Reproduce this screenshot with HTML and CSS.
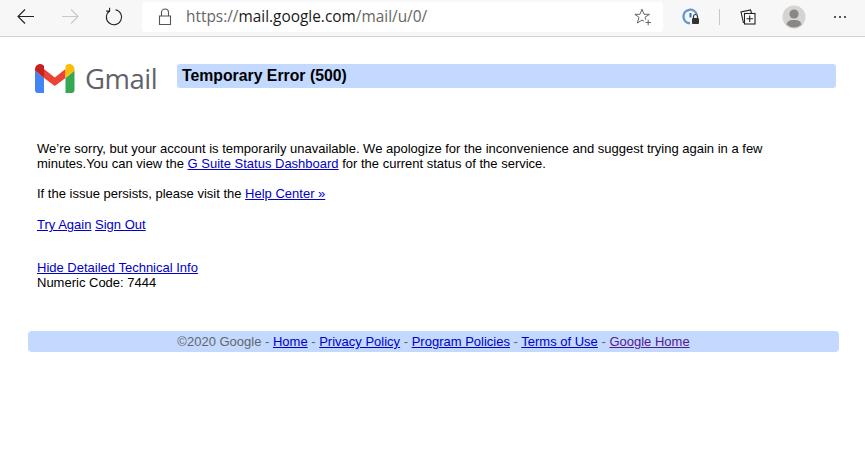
FILE: index.html
```html
<!DOCTYPE html>
<html lang="en">
<head>
<meta charset="utf-8">
<title>Gmail</title>
<link rel="stylesheet" href="styles.css">
</head>
<body>
<header class="toolbar">
  <svg class="ico back" width="20" height="20" viewBox="0 0 20 20"><path d="M18 9.500H2M9 2.500L2 9.500L9 16.500" fill="none" stroke="#222" stroke-width="1.100"/></svg>
  <svg class="ico fwd" width="20" height="20" viewBox="0 0 20 20"><path d="M2 9.500H18M11 2.500L18 9.500L11 16.500" fill="none" stroke="#c8c8c8" stroke-width="1.100"/></svg>
  <svg class="ico reload" width="20" height="20" viewBox="0 0 20 20"><path d="M6 3.200A7.600 7.600 0 1 0 11.500 2.200M5.600 0.200V3.600H2.200" fill="none" stroke="#222" stroke-width="1.100" transform="translate(0 0.500)"/></svg>
  <div class="address">
    <svg class="lock" width="14" height="18" viewBox="0 0 14 18"><path d="M1.500 8h11v8.500h-11zM3.500 8V4.500a3.500 3.500 0 0 1 7 0V8" fill="none" stroke="#555" stroke-width="1.100"/></svg>
    <span class="url"><span class="dim">https://</span>mail.google.com<span class="dim">/mail/u/0/</span></span>
    <svg class="star" width="18" height="18" viewBox="0 0 18 18"><path d="M11.800 11.800L11 9.300L15.500 6.300H10L8 1.200L6 6.300H0.800L5 9.300L3.400 15L8 12L10 13.200" fill="none" stroke="#666" stroke-width="1"/><path d="M11.500 14.500H17M14.200 11.700V17.300" stroke="#666" stroke-width="1"/></svg>
  </div>
  <svg class="ext" width="18" height="20" viewBox="0 0 18 20"><path d="M14.800 7.500A6.800 6.800 0 1 0 8 16.300" fill="none" stroke="#5b9bd9" stroke-width="2.400"/><path d="M5.500 4.500A5.200 5.200 0 0 1 13 5.500" fill="none" stroke="#999" stroke-width="1"/><path d="M8.500 6v4.500" stroke="#2a6fc0" stroke-width="2"/><rect x="10" y="11" width="7" height="6" rx="1" fill="#333"/><path d="M11.500 11V9.500a2 2 0 0 1 4 0V11" fill="none" stroke="#333" stroke-width="1.200"/></svg>
  <span class="sep"></span>
  <svg class="coll" width="18" height="18" viewBox="0 0 18 18"><path d="M4.500 15L2 4L11.500 2L12.500 5" fill="none" stroke="#222" stroke-width="1.100"/><rect x="5.500" y="5.500" width="10.500" height="10.500" fill="#fff" stroke="#222" stroke-width="1.100"/><path d="M10.700 7.500V14M7.500 10.700H14" stroke="#222" stroke-width="1.100"/></svg>
  <svg class="avatar" width="24" height="24" viewBox="0 0 24 24"><circle cx="12" cy="12" r="11.500" fill="#d6d4d2"/><circle cx="12" cy="9" r="4.600" fill="#8a8886"/><path d="M4.500 19.500C5.500 15.500 8.500 15 12 15S18.500 15.500 19.500 19.500A11 11 0 0 1 4.500 19.500Z" fill="#8a8886"/></svg>
  <span class="more"><i></i><i></i><i></i></span>
</header>
<main class="page">
  <div class="top">
    <div class="logo">
      <svg width="40" height="30" viewBox="0 0 40 30">
        <path d="M0 6.500V26a3 3 0 0 0 3 3H9V14Z" fill="#4285f4"/>
        <path d="M30.500 29H36.500a3 3 0 0 0 3-3V6.500L30.500 14Z" fill="#34a853"/>
        <path d="M9 14V5L19.800 13.500L30.500 5V14L19.800 22Z" fill="#ea4335"/>
        <path d="M0 6.500V5.500C0 1 5 -1.500 8 1L9 2V14Z" fill="#c5221f"/>
        <path d="M30.500 14V2L31.500 1C34.500 -1.500 39.500 1 39.500 5.500V6.500Z" fill="#fbbc04"/>
      </svg>
      <span class="wordmark">Gmail</span>
    </div>
    <h1 class="title">Temporary Error (500)</h1>
  </div>
  <div class="content">
    <p class="para">We’re sorry, but your account is temporarily unavailable. We apologize for the inconvenience and suggest trying again in a few minutes.You can view the <a href="#">G Suite Status Dashboard</a> for the current status of the service.</p>
    <p class="para">If the issue persists, please visit the <a href="#">Help Center »</a></p>
    <p class="para actions"><a href="#">Try Again</a> <a href="#">Sign Out</a></p>
    <p class="para tech"><a href="#">Hide Detailed Technical Info</a><br>Numeric Code: 7444</p>
  </div>
  <footer class="foot">©2020 Google - <a href="#">Home</a> - <a href="#">Privacy Policy</a> - <a href="#">Program Policies</a> - <a href="#">Terms of Use</a> - <a class="seen" href="#">Google Home</a></footer>
</main>
</body>
</html>
```

FILE: styles.css
```css
html, body { margin: 0; padding: 0; background: #fff; }
body { font-family: "Liberation Sans", Arial, sans-serif; font-size: 13px; line-height: 15px; color: #000; overflow: hidden; }
a { color: #0000cc; text-decoration: underline; }
a.seen { color: #551a8b; }

.toolbar { height: 34px; padding-bottom: 2px; background: #f7f7f7; border-bottom: 1px solid #d2d2d2; display: flex; align-items: center; }
.toolbar svg { flex: none; }
.back { margin-left: 16px; }
.fwd { margin-left: 24px; }
.reload { margin-left: 24px; }
.address { width: 521px; height: 30px; margin-left: 18px; background: #fff; border-radius: 4px; display: flex; align-items: center; box-sizing: border-box; padding-left: 16px; }
.lock { margin-right: 14px; }
.url { font: 15.4px/20px "Open Sans", sans-serif; color: #1a1a1a; flex: 1; white-space: nowrap; }
.dim { color: #666; }
.star { margin-right: 11px; }
.ext { margin-left: 19px; }
.sep { width: 1px; height: 16px; background: #c8c8c8; margin-left: 19px; }
.coll { margin-left: 19px; }
.avatar { margin-left: 25px; }
.more { display: flex; gap: 3px; margin-left: 28px; }
.more i { width: 2px; height: 2px; background: #222; border-radius: 50%; }

.page { padding: 27px 26px 0 28px; }
.top { display: flex; align-items: flex-start; margin-right: 3px; }
.logo { width: 149px; display: flex; padding-left: 7px; box-sizing: border-box; height: 30px; flex: none; }
.wordmark { font: 27.5px/30px "Open Sans", sans-serif; color: #5f6368; margin-left: 10px; letter-spacing: -0.5px; }
.title { flex: 1; margin: 0; height: 24px; background: #c3d9ff; border-radius: 3px; font-size: 15.8px; line-height: 24px; font-weight: bold; padding-left: 5px; }
.content { padding: 47px 40px 0 9px; }
.para { margin: 0 0 15px; }
.actions { margin-top: 16px; margin-bottom: 28px; }
.tech { margin-bottom: 41px; }
.foot { height: 21px; line-height: 21px; background: #c3d9ff; border-radius: 4px; text-align: center; color: #666; }
```
